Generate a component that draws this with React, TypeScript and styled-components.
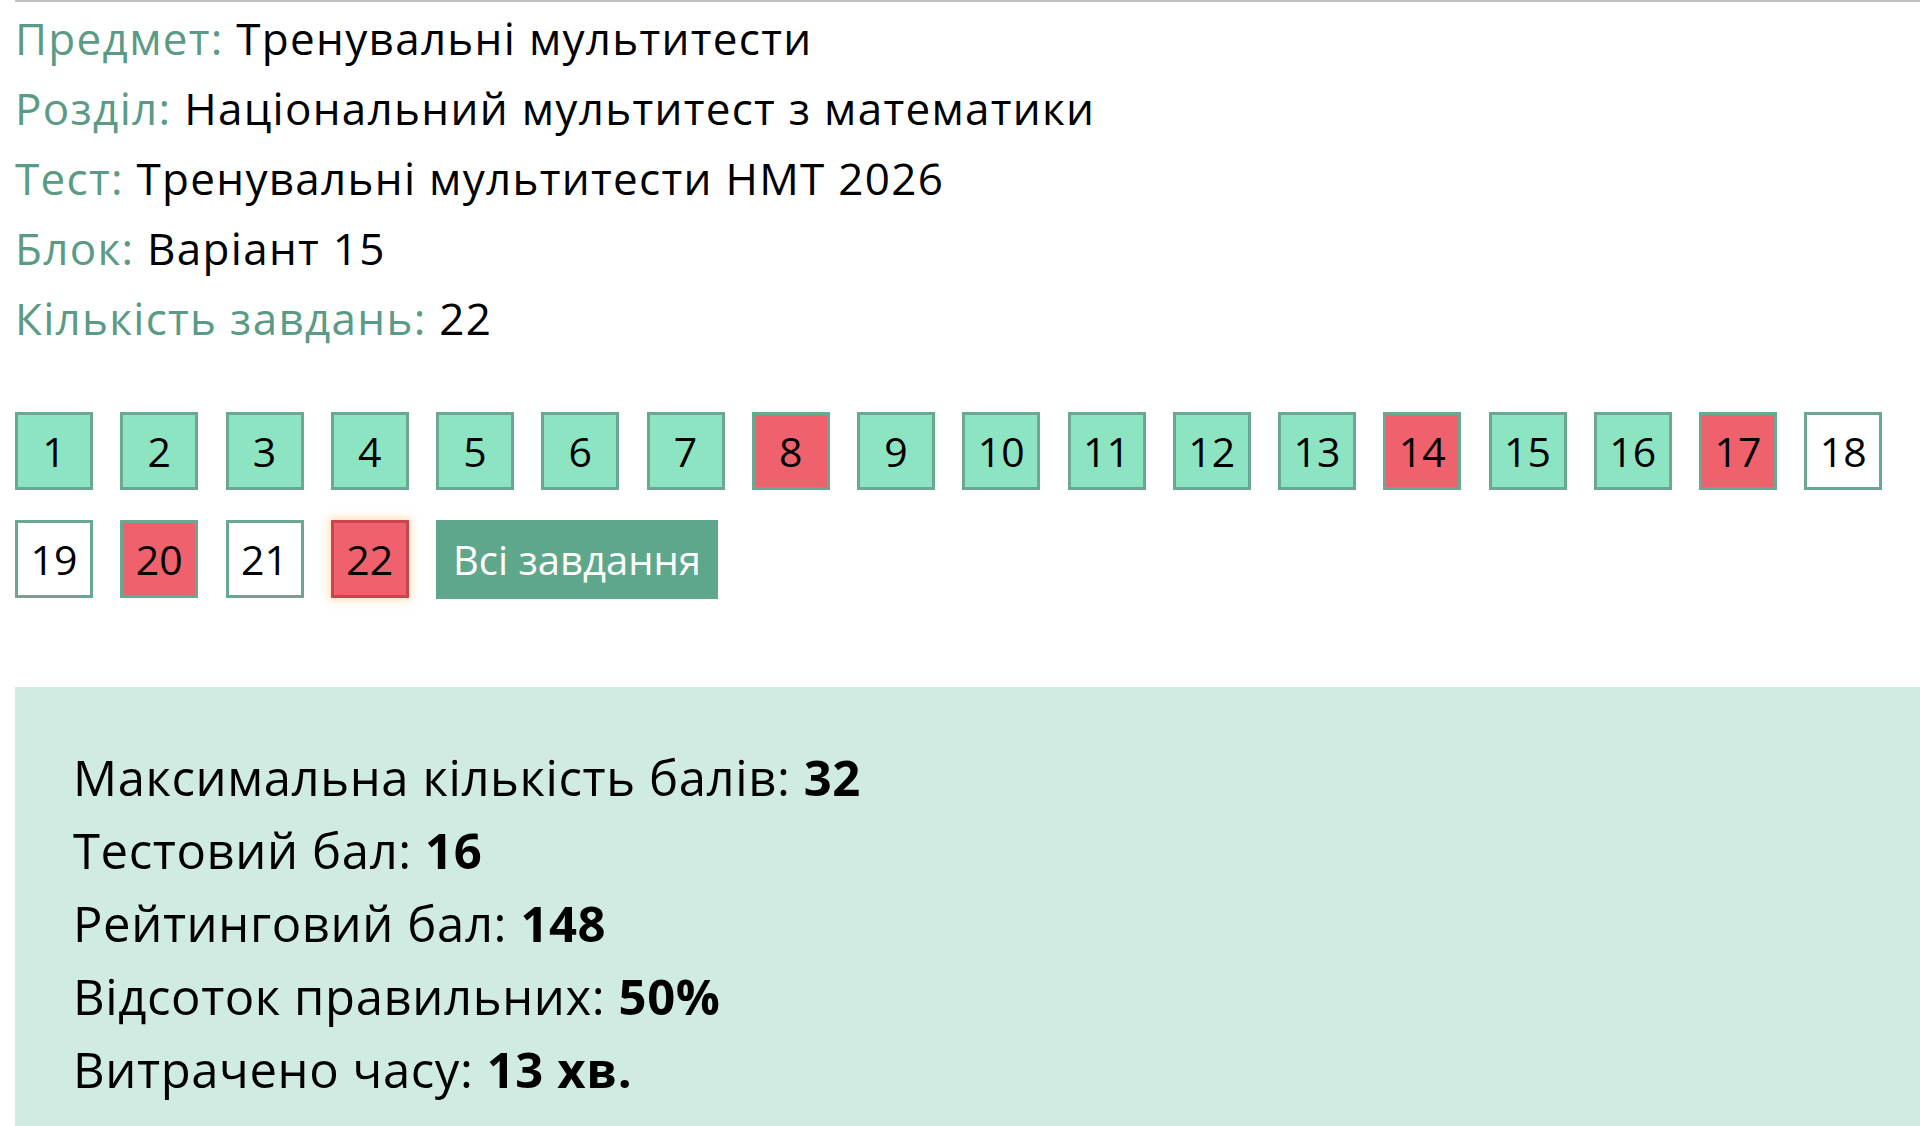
import React from "react";
import styled, { createGlobalStyle } from "styled-components";

const GlobalStyle = createGlobalStyle`
  html, body {
    margin: 0;
    padding: 0;
    background: #ffffff;
  }
  body {
    font-family: "Open Sans", "Noto Sans", sans-serif;
    color: #000000;
  }
`;

const Page = styled.div`
  padding-left: 15px;
`;

const Content = styled.div`
  border-top: 2px solid #c2c2c2;
`;

const InfoList = styled.div`
  display: flex;
  flex-direction: column;
  padding-top: 1px;
`;

const InfoLine = styled.div`
  font-size: 44px;
  line-height: 70px;
  letter-spacing: 1.3px;
  white-space: nowrap;
`;

const Label = styled.span`
  color: #5b9a85;
`;

const Value = styled.span`
  color: #000000;
`;

const TaskGrid = styled.div`
  display: flex;
  flex-wrap: wrap;
  gap: 30px 27.25px;
  margin-top: 59px;
  padding-right: 15px;
`;

type Status = "correct" | "wrong" | "empty";

const fills: Record<Status, string> = {
  correct: "#8ce4c3",
  wrong: "#ee616d",
  empty: "#ffffff",
};

const TaskBox = styled.div<{ $status: Status; $active?: boolean }>`
  box-sizing: border-box;
  width: 78px;
  height: 78px;
  display: flex;
  align-items: center;
  justify-content: center;
  background: ${(p) => fills[p.$status]};
  border: 3px solid ${(p) => (p.$active ? "#c9444f" : "#6aa892")};
  box-shadow: ${(p) => (p.$active ? "0 0 8px 2px rgba(255, 196, 120, 0.55)" : "none")};
  font-size: 41px;
  color: #000000;
`;

const AllTasksButton = styled.div`
  box-sizing: border-box;
  height: 79px;
  padding: 0 17px;
  display: flex;
  align-items: center;
  background: #5fa78b;
  color: #ffffff;
  font-size: 40px;
  white-space: nowrap;
`;

const ResultPanel = styled.div`
  margin-top: 88px;
  background: #d0ebe2;
  padding: 54px 0 40px 58px;
  min-height: 440px;
  box-sizing: border-box;
`;

const ResultLine = styled.div`
  font-size: 49px;
  line-height: 73px;
  letter-spacing: 0.6px;
  white-space: nowrap;
`;

const Strong = styled.b`
  font-weight: 700;
`;

const statuses: Status[] = [
  "correct", "correct", "correct", "correct", "correct", "correct", "correct",
  "wrong", "correct", "correct", "correct", "correct", "correct", "wrong",
  "correct", "correct", "wrong", "empty", "empty", "wrong", "empty", "wrong",
];

const info = [
  { label: "Предмет:", value: "Тренувальні мультитести" },
  { label: "Розділ:", value: "Національний мультитест з математики" },
  { label: "Тест:", value: "Тренувальні мультитести НМТ 2026" },
  { label: "Блок:", value: "Варіант 15" },
  { label: "Кількість завдань:", value: "22" },
];

const results = [
  { label: "Максимальна кількість балів:", value: "32" },
  { label: "Тестовий бал:", value: "16" },
  { label: "Рейтинговий бал:", value: "148" },
  { label: "Відсоток правильних:", value: "50%" },
  { label: "Витрачено часу:", value: "13 хв." },
];

export default function App() {
  return (
    <>
      <GlobalStyle />
      <Page>
        <Content>
          <InfoList>
            {info.map((i) => (
              <InfoLine key={i.label}>
                <Label>{i.label}</Label> <Value>{i.value}</Value>
              </InfoLine>
            ))}
          </InfoList>
          <TaskGrid>
            {statuses.map((s, idx) => (
              <TaskBox key={idx} $status={s} $active={idx === 21}>
                {idx + 1}
              </TaskBox>
            ))}
            <AllTasksButton>Всі завдання</AllTasksButton>
          </TaskGrid>
          <ResultPanel>
            {results.map((r) => (
              <ResultLine key={r.label}>
                {r.label} <Strong>{r.value}</Strong>
              </ResultLine>
            ))}
          </ResultPanel>
        </Content>
      </Page>
    </>
  );
}
